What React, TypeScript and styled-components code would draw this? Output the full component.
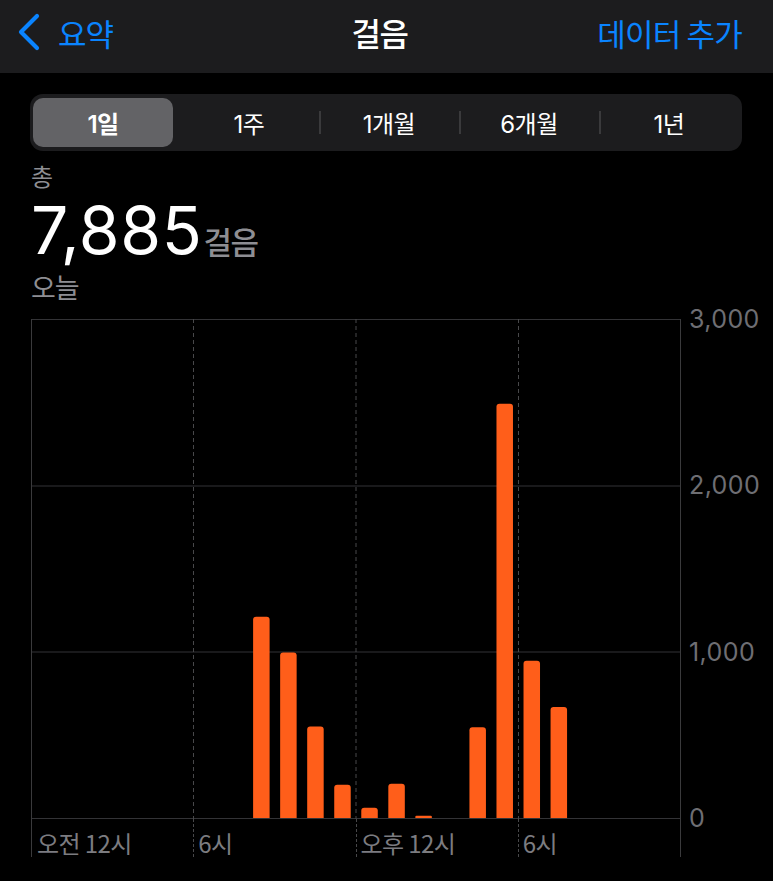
import React from "react";
import styled, { createGlobalStyle } from "styled-components";

const GlobalStyle = createGlobalStyle`
  html, body { margin: 0; padding: 0; background: #000; }
  body {
    font-family: Inter, "Noto Sans CJK KR", "Noto Sans", sans-serif;
    color: #fff;
    -webkit-font-smoothing: antialiased;
  }
  * { box-sizing: border-box; }
`;

const BLUE = "#0a84ff";
const GRAY = "#8e8e93";

const Page = styled.div`
  width: 773px;
  height: 881px;
  background: #000;
  overflow: hidden;
`;

const NavBar = styled.header`
  height: 73px;
  background: #1c1c1e;
  display: grid;
  grid-template-columns: 1fr auto 1fr;
  align-items: center;
  padding: 0 31px 9px 17px;
`;

const BackButton = styled.div`
  display: flex;
  align-items: center;
  gap: 17px;
  color: ${BLUE};
  font-family: "Noto Sans CJK KR", sans-serif;
  font-size: 31px;
  letter-spacing: -1px;
`;

const Title = styled.div`
  font-family: "Noto Sans CJK KR", sans-serif;
  font-size: 32px;
  font-weight: 500;
  letter-spacing: -1.5px;
  color: #fff;
`;

const Action = styled.div`
  justify-self: end;
  color: ${BLUE};
  font-family: "Noto Sans CJK KR", sans-serif;
  font-size: 31px;
  letter-spacing: -0.8px;
`;

const Content = styled.main`
  padding: 0 31px 0 30px;
`;

const Segmented = styled.div`
  margin-top: 21px;
  height: 57px;
  background: #1c1c1e;
  border-radius: 13px;
  padding: 3px;
  display: flex;
`;

const Segment = styled.div<{ $active?: boolean; $divider?: boolean }>`
  flex: 1;
  position: relative;
  display: flex;
  padding: ${(p) => (p.$active ? "1px 6px 1px 0" : "0")};
  &::before {
    content: "";
    display: ${(p) => (p.$divider ? "block" : "none")};
    position: absolute;
    left: 0;
    top: 14px;
    bottom: 14px;
    width: 1.5px;
    background: #3a3a3c;
  }
`;

const SegmentLabel = styled.div<{ $active?: boolean }>`
  flex: 1;
  display: flex;
  align-items: center;
  justify-content: center;
  border-radius: 10px;
  background: ${(p) => (p.$active ? "#636366" : "transparent")};
  font-size: 24px;
  font-weight: ${(p) => (p.$active ? 600 : 400)};
  letter-spacing: -0.5px;
  color: #fff;
`;

const Summary = styled.section`
  margin-top: 10px;
  padding-left: 1px;
`;

const Caption = styled.div<{ $size: number }>`
  font-family: "Noto Sans CJK KR", sans-serif;
  font-size: ${(p) => p.$size}px;
  line-height: 30px;
  color: ${GRAY};
  letter-spacing: -1px;
`;

const Total = styled.div`
  margin-top: 3px;
  height: 72px;
  line-height: 72px;
  display: flex;
  align-items: baseline;
`;

const BigNumber = styled.span`
  font-size: 66px;
  font-weight: 400;
  letter-spacing: 0.6px;
  color: #fff;
`;

const Unit = styled.span`
  font-family: "Noto Sans CJK KR", sans-serif;
  font-size: 31px;
  font-weight: 500;
  color: ${GRAY};
  letter-spacing: -1.5px;
  margin-left: 1px;
`;

const TodayWrap = styled.div`
  margin-top: 6px;
`;

const ChartRow = styled.section`
  margin-top: 17px;
  display: flex;
  padding-left: 1px;
`;

const Plot = styled.div`
  width: 650px;
  display: flex;
  flex-direction: column;
`;

const AxisRow = styled.div`
  height: 38px;
  display: grid;
  grid-template-columns: repeat(4, 1fr);
  border-right: 1px solid #3a3a3c;
`;

const AxisCell = styled.div<{ $first?: boolean }>`
  border-left: 1px ${(p) => (p.$first ? "solid #3a3a3c" : "dashed #48484a")};
  padding-left: ${(p) => (p.$first ? 5 : 4)}px;
  font-family: "Noto Sans CJK KR", sans-serif;
  font-size: 24px;
  line-height: 48px;
  height: 38px;
  color: #7c7c80;
  letter-spacing: -0.6px;
  white-space: nowrap;
`;

const YAxis = styled.div`
  margin-top: -15px;
  margin-left: 8px;
  display: flex;
  flex-direction: column;
`;

const YLabel = styled.div`
  height: 166.33px;
  line-height: 30px;
  font-size: 25px;
  font-weight: 400;
  color: #6e6e73;
  letter-spacing: 0.4px;
`;

const steps: Array<[number, number]> = [
  [8, 1210],
  [9, 995],
  [10, 550],
  [11, 200],
  [12, 62],
  [13, 206],
  [14, 14],
  [16, 545],
  [17, 2490],
  [18, 945],
  [19, 668],
];

const W = 650;
const H = 500;
const BASE = 499;
const SLOT = 649 / 24;
const BAR_W = 16.5;

function Chevron() {
  return (
    <svg width="24" height="38" viewBox="0 0 24 38">
      <polyline
        points="20,3 4,19 20,35"
        fill="none"
        stroke={BLUE}
        strokeWidth="4.2"
        strokeLinecap="round"
        strokeLinejoin="round"
      />
    </svg>
  );
}

function Bars() {
  const grid = [0.5, 167, 333, BASE + 0.5];
  const dashes = [162.5, 325, 487.5];
  return (
    <svg width={W} height={H} viewBox={`0 0 ${W} ${H}`} style={{ display: "block" }}>
      {grid.map((y) => (
        <line key={y} x1={0} x2={W} y1={y} y2={y} stroke="#333336" strokeWidth={1} />
      ))}
      <line x1={0.5} x2={0.5} y1={0} y2={H} stroke="#3a3a3c" strokeWidth={1} />
      <line x1={649.5} x2={649.5} y1={0} y2={H} stroke="#3a3a3c" strokeWidth={1} />
      {dashes.map((x) => (
        <line
          key={x}
          x1={x}
          x2={x}
          y1={0}
          y2={H}
          stroke="#48484a"
          strokeWidth={1}
          strokeDasharray="4 3"
        />
      ))}
      {steps.map(([hour, v]) => {
        const bh = (v * 499) / 3000;
        const x = hour * SLOT + (SLOT - BAR_W) / 2 + 0.5;
        const r = Math.min(3, bh / 2);
        const y = BASE - bh;
        const d = `M${x},${BASE} L${x},${y + r} Q${x},${y} ${x + r},${y} L${x + BAR_W - r},${y} Q${x + BAR_W},${y} ${x + BAR_W},${y + r} L${x + BAR_W},${BASE} Z`;
        return <path key={hour} d={d} fill="#ff5e1a" />;
      })}
    </svg>
  );
}

const segments = ["1일", "1주", "1개월", "6개월", "1년"];

export default function App() {
  return (
    <Page>
      <GlobalStyle />
      <NavBar>
        <BackButton>
          <Chevron />
          <span>요약</span>
        </BackButton>
        <Title>걸음</Title>
        <Action>데이터 추가</Action>
      </NavBar>
      <Content>
        <Segmented>
          {segments.map((s, i) => (
            <Segment key={s} $active={i === 0} $divider={i >= 2}>
              <SegmentLabel $active={i === 0}>{s}</SegmentLabel>
            </Segment>
          ))}
        </Segmented>
        <Summary>
          <Caption $size={24}>총</Caption>
          <Total>
            <BigNumber>7,885</BigNumber>
            <Unit>걸음</Unit>
          </Total>
          <TodayWrap>
            <Caption $size={27}>오늘</Caption>
          </TodayWrap>
        </Summary>
        <ChartRow>
          <Plot>
            <Bars />
            <AxisRow>
              <AxisCell $first>오전 12시</AxisCell>
              <AxisCell>6시</AxisCell>
              <AxisCell>오후 12시</AxisCell>
              <AxisCell>6시</AxisCell>
            </AxisRow>
          </Plot>
          <YAxis>
            <YLabel>3,000</YLabel>
            <YLabel>2,000</YLabel>
            <YLabel>1,000</YLabel>
            <YLabel>0</YLabel>
          </YAxis>
        </ChartRow>
      </Content>
    </Page>
  );
}
